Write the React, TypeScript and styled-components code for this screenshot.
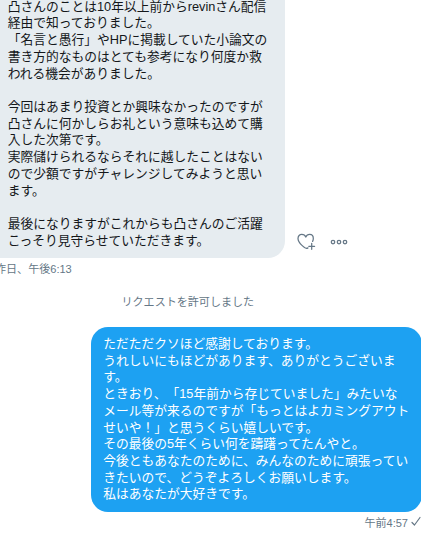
import React from "react";
import styled, { createGlobalStyle } from "styled-components";

const GlobalStyle = createGlobalStyle`
  body {
    margin: 0;
    background: #fff;
    overflow: hidden;
    font-family: "Liberation Sans", "Noto Sans CJK JP", sans-serif;
    text-spacing-trim: space-all;
  }
`;

const Conversation = styled.main`
  width: 421px;
  height: 535px;
  overflow: hidden;
  display: flex;
  flex-direction: column;
  background: #fff;
`;

const Row = styled.div<{ $outgoing?: boolean }>`
  display: flex;
  flex: none;
  align-items: flex-end;
  height: ${(p) => (p.$outgoing ? "185px" : "258px")};
  margin-left: ${(p) => (p.$outgoing ? "91px" : "-5px")};
`;

const Bubble = styled.div<{ $outgoing?: boolean }>`
  box-sizing: border-box;
  flex: none;
  width: ${(p) => (p.$outgoing ? "331px" : "290px")};
  padding: ${(p) => (p.$outgoing ? "8.85px 12.25px" : "8.5px 12.75px")};
  border-radius: ${(p) => (p.$outgoing ? "17px" : "0 0 17px 0")};
  background: ${(p) => (p.$outgoing ? "#1da1f2" : "#e6ecf0")};
  color: ${(p) => (p.$outgoing ? "#fff" : "#14171a")};
  font-size: 12.75px;
  line-height: 16.73px;
`;

const Line = styled.div`
  height: 16.73px;
  white-space: pre;
`;

const Actions = styled.div`
  display: flex;
  align-items: center;
  gap: 14px;
  margin: 0 0 7px 12px;
`;

const Meta = styled.div<{ $outgoing?: boolean }>`
  display: flex;
  flex: none;
  align-items: center;
  height: ${(p) => (p.$outgoing ? "20px" : "19px")};
  gap: 3px;
  justify-content: ${(p) => (p.$outgoing ? "flex-end" : "flex-start")};
  margin-left: ${(p) => (p.$outgoing ? "0" : "-5px")};
  color: #657786;
  font-size: 11.05px;
  white-space: nowrap;
`;

const Notice = styled.div`
  flex: none;
  height: 50px;
  padding-top: 17px;
  box-sizing: border-box;
  margin-left: 121.5px;
  color: #657786;
  font-size: 11.05px;
  line-height: 17px;
`;

const received = [
  "凸さんのことは10年以上前からrevinさん配信",
  "経由で知っておりました。",
  "「名言と愚行」やHPに掲載していた小論文の",
  "書き方的なものはとても参考になり何度か救",
  "われる機会がありました。",
  "",
  "今回はあまり投資とか興味なかったのですが",
  "凸さんに何かしらお礼という意味も込めて購",
  "入した次第です。",
  "実際儲けられるならそれに越したことはない",
  "ので少額ですがチャレンジしてみようと思い",
  "ます。",
  "",
  "最後になりますがこれからも凸さんのご活躍",
  "こっそり見守らせていただきます。",
];

const sent = [
  "ただただクソほど感謝しております。",
  "うれしいにもほどがあります、ありがとうございま",
  "す。",
  "ときおり、「15年前から存じていました」みたいな",
  "メール等が来るのですが「もっとはよカミングアウト",
  "せいや！」と思うくらい嬉しいです。",
  "その最後の5年くらい何を躊躇ってたんやと。",
  "今後ともあなたのために、みんなのために頑張ってい",
  "きたいので、どうぞよろしくお願いします。",
  "私はあなたが大好きです。",
];

const HeartPlus = () => (
  <svg width="19" height="18" viewBox="0 0 19 18" fill="none" stroke="#657786" strokeWidth="1.25" strokeLinecap="round" strokeLinejoin="round">
    <path d="M9.9 15.4C8.6 15.4 1 10.6 1 5.6C1 3 2.6 1.4 4.8 1.4C6.8 1.4 8.2 2.6 8.8 4.1C9.4 2.6 10.8 1.4 12.7 1.4C15 1.4 16.3 3.1 16.3 5.4C16.3 6.4 16.1 7.4 15.6 8.4" />
    <path d="M9.9 15.4L11 14.9M14.7 10.3V16.3M11.8 13.3H17.6" />
  </svg>
);

const MoreDots = () => (
  <svg width="18" height="18" viewBox="0 0 18 18" fill="none" stroke="#657786" strokeWidth="1.25">
    <circle cx="3" cy="9" r="1.75" />
    <circle cx="9" cy="9" r="1.75" />
    <circle cx="15" cy="9" r="1.75" />
  </svg>
);

const Check = () => (
  <svg width="10" height="12" viewBox="0 0 10 12" fill="none" stroke="#657786" strokeWidth="1.2" strokeLinecap="round" strokeLinejoin="round">
    <path d="M1 6.5L3.5 9L9 1.5" />
  </svg>
);

export default function App() {
  return (
    <>
      <GlobalStyle />
      <Conversation>
        <Row>
          <Bubble>
            {received.map((text, i) => (
              <Line key={i}>{text}</Line>
            ))}
          </Bubble>
          <Actions>
            <HeartPlus />
            <MoreDots />
          </Actions>
        </Row>
        <Meta>昨日、午後6:13</Meta>
        <Notice>リクエストを許可しました</Notice>
        <Row $outgoing>
          <Bubble $outgoing>
            {sent.map((text, i) => (
              <Line key={i}>{text}</Line>
            ))}
          </Bubble>
        </Row>
        <Meta $outgoing>
          午前4:57
          <Check />
        </Meta>
      </Conversation>
    </>
  );
}
